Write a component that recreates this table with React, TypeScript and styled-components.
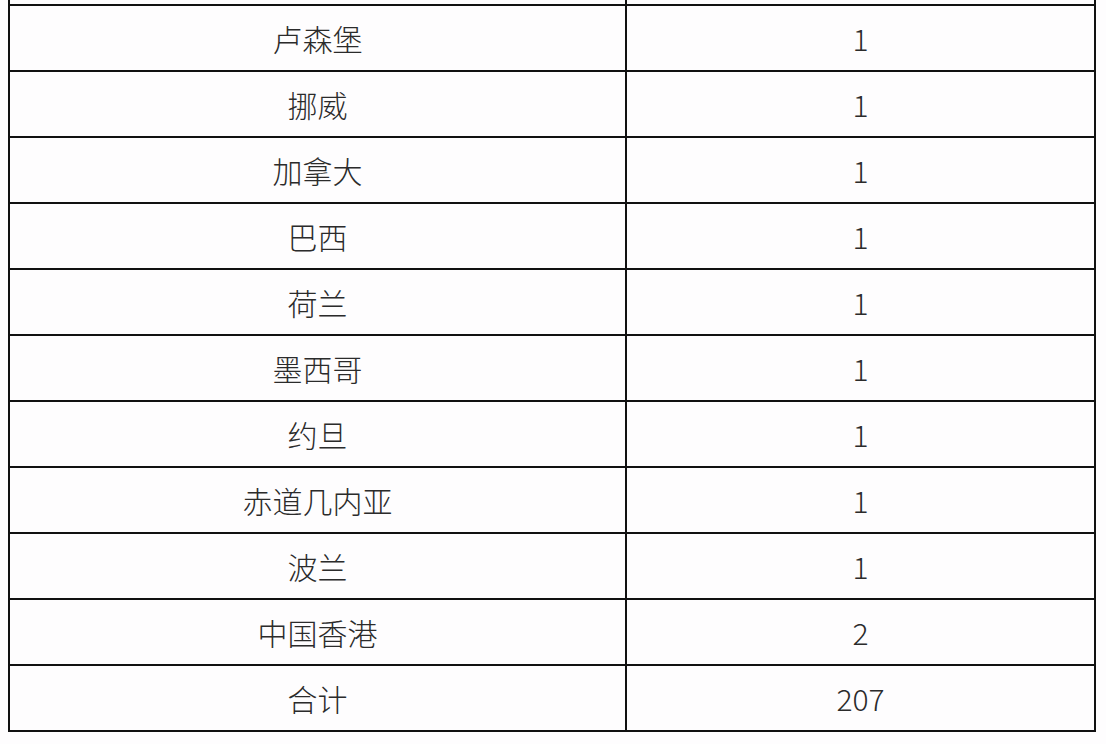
import React from 'react';
import styled, { createGlobalStyle } from 'styled-components';

const GlobalStyle = createGlobalStyle`
    html, body {
        margin: 0;
        padding: 0;
        background: #fefdfe;
        overflow: hidden;
    }
`;

const Page = styled.div`
    width: 1106px;
    height: 744px;
    overflow: hidden;
    padding-left: 8px;
    box-sizing: border-box;
`;

const Table = styled.table`
    margin-top: -62px;
    width: 1088px;
    border-collapse: collapse;
    font-family: "Noto Sans CJK SC", "Noto Sans", sans-serif;
    font-size: 30px;
    font-weight: 300;
    color: #2b2b2b;
`;

const Cell = styled.td<{ wide?: boolean }>`
    border: 2px solid #111;
    height: 64px;
    padding: 0;
    text-align: center;
    vertical-align: middle;
    width: ${(props) => (props.wide ? '615px' : 'auto')};
`;

const rows: [string, string][] = [
    ['', ''],
    ['卢森堡', '1'],
    ['挪威', '1'],
    ['加拿大', '1'],
    ['巴西', '1'],
    ['荷兰', '1'],
    ['墨西哥', '1'],
    ['约旦', '1'],
    ['赤道几内亚', '1'],
    ['波兰', '1'],
    ['中国香港', '2'],
    ['合计', '207'],
];

const App: React.FC = () => (
    <Page>
        <GlobalStyle />
        <Table>
            <tbody>
                {rows.map(([name, count], i) => (
                    <tr key={i}>
                        <Cell wide>{name}</Cell>
                        <Cell>{count}</Cell>
                    </tr>
                ))}
            </tbody>
        </Table>
    </Page>
);

export default App;
